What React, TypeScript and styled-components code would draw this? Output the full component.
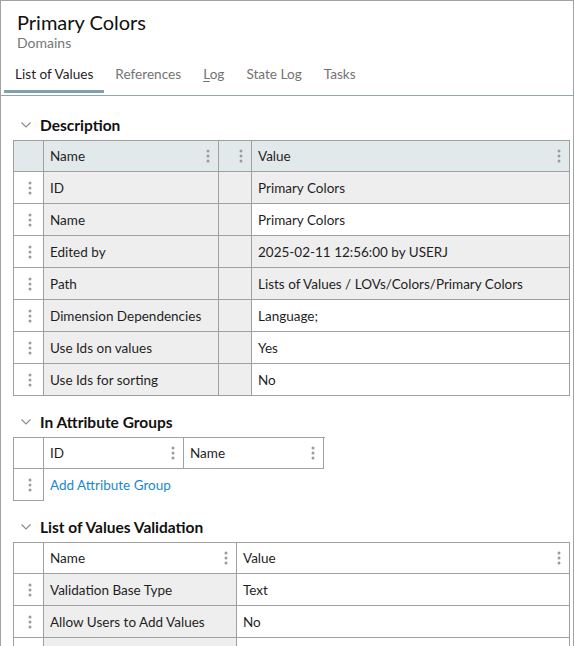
import styled, { createGlobalStyle } from "styled-components";

const GlobalStyle = createGlobalStyle`
  html, body {
    margin: 0;
    padding: 0;
    background: #ffffff;
  }
  body {
    font-family: Lato, "Noto Sans", sans-serif;
    font-size: 13.5px;
    color: #1f1f1f;
  }
`;

const Frame = styled.div`
  box-sizing: border-box;
  width: 574px;
  height: 646px;
  overflow: hidden;
  border: 1px solid #a3a3a3;
  border-bottom: none;
  background: #fff;
`;

const Header = styled.div`
  padding: 8px 0 0 16px;
`;

const Title = styled.div`
  font-size: 20px;
  line-height: 26px;
  color: #111;
`;

const Subtitle = styled.div`
  font-size: 14px;
  line-height: 16px;
  color: #767676;
`;

const TabBar = styled.div`
  display: flex;
  margin-top: 9px;
  padding-left: 3px;
  border-bottom: 1px solid #8fa8b0;
`;

const Tab = styled.div<{ $active?: boolean }>`
  padding: 0 11px;
  height: 33px;
  line-height: 28px;
  font-size: 13.6px;
  color: ${(p) => (p.$active ? "#1f1f1f" : "#737373")};
  box-shadow: ${(p) => (p.$active ? "inset 0 -3px 0 #7fa2ab" : "none")};
  margin-bottom: 2px;
  box-sizing: border-box;
  u {
    text-decoration: underline;
    text-underline-offset: 2px;
  }
`;

const Content = styled.div`
  padding: 3px 3px 0 12px;
`;

const Section = styled.section`
  margin-top: 11px;
`;

const SectionHeading = styled.div`
  display: flex;
  align-items: center;
  gap: 9px;
  height: 30px;
  padding-left: 8px;
  font-weight: 700;
  font-size: 15.5px;
  color: #111;
`;

const Grid = styled.div<{ $cols: string; $width?: string }>`
  display: grid;
  grid-template-columns: ${(p) => p.$cols};
  width: ${(p) => p.$width ?? "auto"};
  border-left: 1px solid #a0a0a0;
  border-top: 1px solid #a0a0a0;
`;

const Cell = styled.div<{ $bg?: string; $head?: boolean; $bare?: boolean }>`
  box-sizing: border-box;
  height: ${(p) => (p.$head ? "31px" : "32px")};
  display: flex;
  align-items: center;
  justify-content: space-between;
  padding: 0 8px 0 6px;
  background: ${(p) => p.$bg ?? "#fff"};
  border-right: ${(p) => (p.$bare ? "none" : "1px solid #a0a0a0")};
  border-bottom: ${(p) => (p.$bare ? "none" : "1px solid #a0a0a0")};
  white-space: nowrap;
  overflow: hidden;
`;

const HandleCell = styled(Cell)`
  justify-content: center;
  padding: 0 0 0 3px;
`;

const SpanCell = styled(Cell)`
  grid-column: span 2;
`;

const Link = styled.a`
  color: #1b87cf;
  text-decoration: none;
  cursor: pointer;
`;

const HEAD_BG = "#e2e9eb";
const GRAY = "#eeeeee";

const Dots = () => (
  <svg width="4" height="14" viewBox="0 0 4 14" style={{ flex: "none" }}>
    <circle cx="2" cy="2" r="1.5" fill="#9b9b9b" />
    <circle cx="2" cy="7" r="1.5" fill="#9b9b9b" />
    <circle cx="2" cy="12" r="1.5" fill="#9b9b9b" />
  </svg>
);

const Chevron = () => (
  <svg width="10" height="6" viewBox="0 0 10 6">
    <polyline
      points="0.5,0.5 5,5 9.5,0.5"
      fill="none"
      stroke="#8a8a8a"
      strokeWidth="1.1"
    />
  </svg>
);

const descriptionRows = [
  { name: "ID", value: "Primary Colors", gray: true },
  { name: "Name", value: "Primary Colors", gray: false },
  { name: "Edited by", value: "2025-02-11 12:56:00 by USERJ", gray: true },
  { name: "Path", value: "Lists of Values / LOVs/Colors/Primary Colors", gray: true },
  { name: "Dimension Dependencies", value: "Language;", gray: false },
  { name: "Use Ids on values", value: "Yes", gray: false },
  { name: "Use Ids for sorting", value: "No", gray: false },
];

const validationRows = [
  { name: "Validation Base Type", value: "Text" },
  { name: "Allow Users to Add Values", value: "No" },
  { name: "", value: "" },
];

export default function App() {
  return (
    <>
      <GlobalStyle />
      <Frame>
        <Header>
          <Title>Primary Colors</Title>
          <Subtitle>Domains</Subtitle>
        </Header>
        <TabBar>
          <Tab $active>List of Values</Tab>
          <Tab>References</Tab>
          <Tab>
            <u>L</u>og
          </Tab>
          <Tab>State Log</Tab>
          <Tab>Tasks</Tab>
        </TabBar>

        <Content>
          <Section>
            <SectionHeading>
              <Chevron />
              Description
            </SectionHeading>
            <Grid $cols="30px 175px 33px 318px">
              <HandleCell $head $bg={HEAD_BG} />
              <Cell $head $bg={HEAD_BG}>
                Name <Dots />
              </Cell>
              <Cell $head $bg={HEAD_BG}>
                <span />
                <Dots />
              </Cell>
              <Cell $head $bg={HEAD_BG}>
                Value <Dots />
              </Cell>
              {descriptionRows.map((r) => (
                <Row key={r.name} name={r.name} value={r.value} gray={r.gray} />
              ))}
            </Grid>
          </Section>

          <Section>
            <SectionHeading>
              <Chevron />
              In Attribute Groups
            </SectionHeading>
            <Grid $cols="30px 140px 140px" $width="311px">
              <HandleCell $head />
              <Cell $head>
                ID <Dots />
              </Cell>
              <Cell $head>
                Name <Dots />
              </Cell>
              <HandleCell>
                <Dots />
              </HandleCell>
              <SpanCell $bare>
                <Link>Add Attribute Group</Link>
              </SpanCell>
            </Grid>
          </Section>

          <Section>
            <SectionHeading>
              <Chevron />
              List of Values Validation
            </SectionHeading>
            <Grid $cols="30px 193px 333px">
              <HandleCell $head />
              <Cell $head>
                Name <Dots />
              </Cell>
              <Cell $head>
                Value <Dots />
              </Cell>
              {validationRows.map((r, i) => (
                <ValidationRow key={i} name={r.name} value={r.value} />
              ))}
            </Grid>
          </Section>
        </Content>
      </Frame>
    </>
  );
}

const Row = ({ name, value, gray }: { name: string; value: string; gray: boolean }) => (
  <>
    <HandleCell>
      <Dots />
    </HandleCell>
    <Cell $bg={GRAY}>{name}</Cell>
    <Cell $bg={GRAY} />
    <Cell $bg={gray ? GRAY : "#fff"}>{value}</Cell>
  </>
);

const ValidationRow = ({ name, value }: { name: string; value: string }) => (
  <>
    <HandleCell>
      <Dots />
    </HandleCell>
    <Cell $bg={GRAY}>{name}</Cell>
    <Cell>{value}</Cell>
  </>
);
